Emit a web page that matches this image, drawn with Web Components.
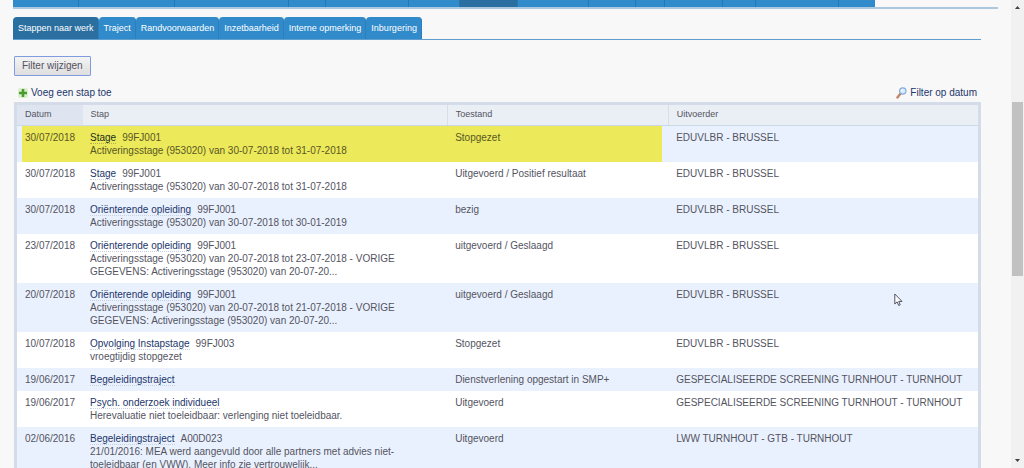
<!DOCTYPE html>
<html lang="nl">
<head>
<meta charset="utf-8">
<title>Stappen naar werk</title>
<style>
html, body { margin: 0; height: 100%; }
body { background: #f8f8f8; color: #54545f; font: 10px/14px "Liberation Sans", Arial, sans-serif; overflow: hidden; }
</style>
</head>
<body>
<dossier-page>
  <main-strip></main-strip>
  <tab-bar>
    <tab-item active>Stappen naar werk</tab-item>
    <tab-item>Traject</tab-item>
    <tab-item>Randvoorwaarden</tab-item>
    <tab-item>Inzetbaarheid</tab-item>
    <tab-item>Interne opmerking</tab-item>
    <tab-item>Inburgering</tab-item>
  </tab-bar>
  <push-button>Filter wijzigen</push-button>
  <action-row>
    <icon-link icon="plus">Voeg een stap toe</icon-link>
    <icon-link icon="lens">Filter op datum</icon-link>
  </action-row>
  <steps-table></steps-table>
  <side-scroll slot="side"></side-scroll>
  <mouse-pointer slot="over"></mouse-pointer>
</dossier-page>

<script>
function define(name, html, setup) {
  customElements.define(name, class extends HTMLElement {
    constructor() {
      super();
      this.attachShadow({ mode: "open" }).innerHTML = html;
    }
    connectedCallback() {
      if (setup && !this.ready) { this.ready = true; setup(this, this.shadowRoot); }
    }
  });
}

define("dossier-page", `
<style>
:host { display: flex; position: relative; height: 100vh; overflow: hidden; }
main { flex: 1; min-width: 0; height: 100%; overflow: hidden; padding: 0 30px 0 13px; box-sizing: border-box; }
</style>
<main><slot></slot></main>
<slot name="side"></slot>
<slot name="over"></slot>`);

define("main-strip", `
<style>
:host { display: block; margin-right: -17px; border-bottom: 2px solid #abc8df; }
nav { display: flex; width: 87.5%; height: 7px; }
i { border-right: 1px solid #2678b2; background: #318bcb; box-sizing: border-box; }
i.on { background: #2a6f9f; }
i:last-child { border-right: 0; }
</style>
<nav aria-label="Hoofdmenu"></nav>`, (el, root) => {
  const parts = [66, 96, 115, 37, 83, 51, 58, 71, 46, 29, 58, 32, 84, 36];
  root.querySelector("nav").innerHTML = parts
    .map((n, k) => `<i style="flex:${n} 0 0"${k === 6 ? ' class="on"' : ""}></i>`).join("");
});

define("tab-bar", `
<style>
:host { display: flex; margin-top: 8px; border-bottom: 1px solid #5f9fd0; }
</style>
<slot></slot>`);

define("tab-item", `
<style>
:host { display: block; }
a { display: block; padding: 4px 4px 4px 5px; border-right: 1px solid #2a7fbc; border-radius: 4px 4px 0 0;
    background: #318bcb; color: #fff; font-size: 9px; text-decoration: none; white-space: nowrap; }
:host([active]) a { background: #2a6f9f; }
</style>
<a href="#"><slot></slot></a>`);

define("push-button", `
<style>
:host { display: flex; margin: 16px 0 0 1px; }
button { font: inherit; color: #54505f; padding: 2px 7px; border: 1px solid #7f9ce0; border-radius: 1px;
         background: linear-gradient(#f4f4f4, #dedede); }
</style>
<button type="button"><slot></slot></button>`);

define("action-row", `
<style>
:host { display: flex; justify-content: space-between; margin: 10px 4px 2px 5px; }
</style>
<slot></slot>`);

const ICONS = {
  plus: `<svg width="10" height="10" viewBox="0 0 10 10"><rect width="10" height="10" rx="2" fill="#dcefd0"/><path d="M3.7 1h2.6v2.7H9v2.6H6.3V9H3.7V6.3H1V3.7h2.7z" fill="#4a9a2c"/></svg>`,
  lens: `<svg width="11" height="12" viewBox="0 0 11 12"><path d="M1.4 10.4 4.4 6.8" stroke="#c08468" stroke-width="2.4" stroke-linecap="round"/><circle cx="6.8" cy="4" r="3.2" fill="#d9edff" stroke="#86a9dc" stroke-width="1.2"/><path d="M5.2 4a1.7 1.7 0 0 1 1.7-1.6" stroke="#fff" fill="none"/></svg>`
};
define("icon-link", `
<style>
:host { display: block; }
a { display: flex; align-items: center; gap: 3px; color: #22366b; text-decoration: none; }
#icon { display: flex; }
</style>
<a href="#"><span id="icon"></span><slot></slot></a>`, (el, root) => {
  root.getElementById("icon").innerHTML = ICONS[el.getAttribute("icon")];
});

define("steps-table", `
<style>
:host { display: block; margin-left: 1px; border: 3px solid #d3dce8; }
table { width: 100%; table-layout: fixed; border-collapse: collapse; line-height: 13px; }
.c1 { width: 65px; } .c2 { width: 38%; } .c3 { width: 23%; }
th { height: 20px; padding: 0 8px; box-sizing: border-box; text-align: left; font-weight: normal; font-size: 9px;
     background: #eaeef5; border-right: 1px solid #d6deea; border-bottom: 1px solid #cbd8e8; }
th:first-child { background: #dfe4f1; border-right-color: #dfe4f1; }
th:last-child { border-right: 0; }
td { padding: 5px 0 5px 8px; vertical-align: top; }
td:nth-child(2) { padding-right: 32px; }
td:last-child { white-space: nowrap; }
tbody tr { background: #fff; }
tbody tr:nth-child(odd) { background: #eaf1fe; }
a { color: #22366b; text-decoration: none; border-bottom: 1px dotted #c6d0e4; margin-right: 6px; }
.mark td:not(:last-child) { background: #ece95a; color: #5a5726; }
.mark td:first-child:first-child { background: linear-gradient(90deg, #eaf1fe 5px, #ece95a 5px); }
.mark td:nth-child(3):nth-child(3) { background: linear-gradient(270deg, #eaf1fe 6px, #ece95a 6px); }
.mark a { color: #22301f; border-color: #b5b24c; }
</style>
<table>
<colgroup><col class="c1"><col class="c2"><col class="c3"><col></colgroup>
<thead><tr><th scope="col">Datum</th><th scope="col">Stap</th><th scope="col">Toestand</th><th scope="col">Uitvoerder</th></tr></thead>
<tbody></tbody>
</table>`, (el, root) => {
  const brussel = "EDUVLBR - BRUSSEL";
  const turnhout = "GESPECIALISEERDE SCREENING TURNHOUT - TURNHOUT";
  const rows = [
    ["30/07/2018", "Stage", "99FJ001", "Activeringsstage (953020) van 30-07-2018 tot 31-07-2018", "Stopgezet", brussel],
    ["30/07/2018", "Stage", "99FJ001", "Activeringsstage (953020) van 30-07-2018 tot 31-07-2018", "Uitgevoerd / Positief resultaat", brussel],
    ["30/07/2018", "Oriënterende opleiding", "99FJ001", "Activeringsstage (953020) van 30-07-2018 tot 30-01-2019", "bezig", brussel],
    ["23/07/2018", "Oriënterende opleiding", "99FJ001", "Activeringsstage (953020) van 20-07-2018 tot 23-07-2018 - VORIGE GEGEVENS: Activeringsstage (953020) van 20-07-20...", "uitgevoerd / Geslaagd", brussel],
    ["20/07/2018", "Oriënterende opleiding", "99FJ001", "Activeringsstage (953020) van 20-07-2018 tot 21-07-2018 - VORIGE GEGEVENS: Activeringsstage (953020) van 20-07-20...", "uitgevoerd / Geslaagd", brussel],
    ["10/07/2018", "Opvolging Instapstage", "99FJ003", "vroegtijdig stopgezet", "Stopgezet", brussel],
    ["19/06/2017", "Begeleidingstraject", "", "", "Dienstverlening opgestart in SMP+", turnhout],
    ["19/06/2017", "Psych. onderzoek individueel", "", "Herevaluatie niet toeleidbaar: verlenging niet toeleidbaar.", "Uitgevoerd", turnhout],
    ["02/06/2016", "Begeleidingstraject", "A00D023", "21/01/2016: MEA werd aangevuld door alle partners met advies niet-toeleidbaar (en VWW). Meer info zie vertrouwelijk...", "Uitgevoerd", "LWW TURNHOUT - GTB - TURNHOUT"]
  ];
  root.querySelector("tbody").innerHTML = rows.map(([date, step, code, note, state, by], k) =>
    `<tr${k === 0 ? ' class="mark"' : ""}><td>${date}</td><td><a href="#">${step}</a>${code}${note ? `<div>${note}</div>` : ""}</td><td>${state}</td><td>${by}</td></tr>`
  ).join("");
});

define("side-scroll", `
<style>
:host { display: flex; flex-direction: column; width: 13px; background: #f1f1f1; }
svg { display: block; margin: 4px auto; }
.track { flex: 1; display: flex; flex-direction: column; padding: 0 1px; }
.before { flex: 88; } .thumb { flex: 174; background: #c1c1c1; } .after { flex: 178; }
</style>
<svg width="7" height="6" viewBox="0 0 7 6"><path d="M1 5 3.5 2 6 5z" fill="#404040"/></svg>
<div class="track"><div class="before"></div><div class="thumb"></div><div class="after"></div></div>
<svg width="7" height="6" viewBox="0 0 7 6"><path d="M1 1 3.5 4 6 1z" fill="#404040"/></svg>`);

define("mouse-pointer", `
<style>
:host { display: block; position: absolute; left: 894px; top: 293px; }
svg { display: block; }
</style>
<svg width="9" height="14" viewBox="0 0 9 14"><path d="M.8 1v10l2.3-2.1 1.6 3.6 1.5-.7-1.5-3.4H8z" fill="#fff" stroke="#3d4150" stroke-width=".9"/></svg>`);
</script>
</body>
</html>
